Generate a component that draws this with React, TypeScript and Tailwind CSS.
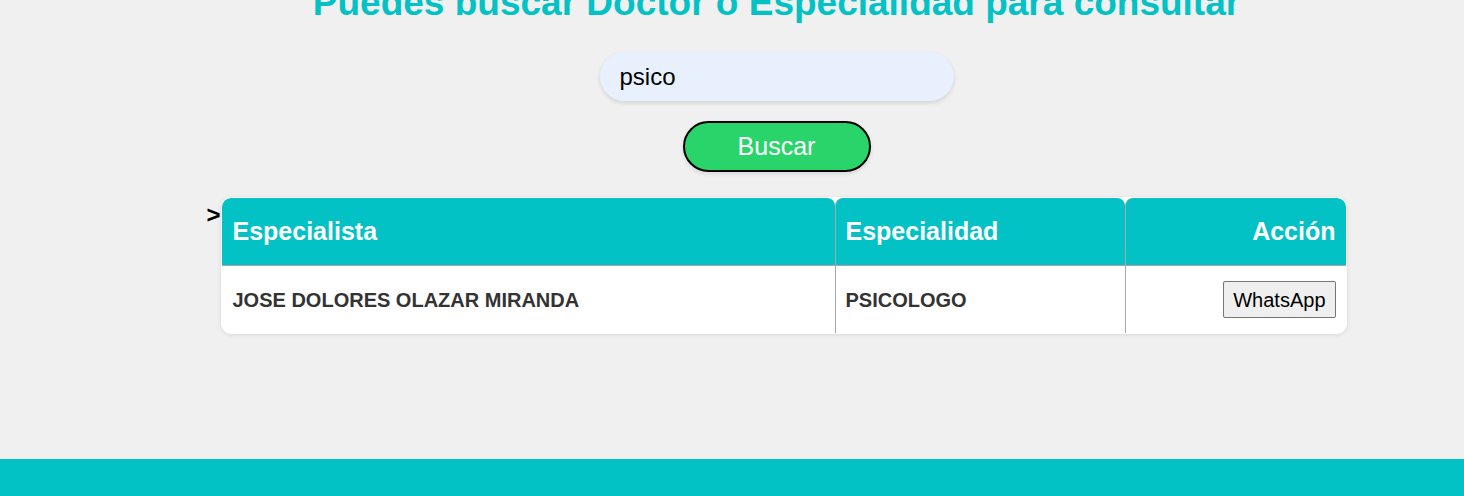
import React from 'react';

const doctors = [
  { name: 'JOSE DOLORES OLAZAR MIRANDA', specialty: 'PSICOLOGO' },
];

export default function App() {
  return (
    <div
      className="bg-[#f0f0f0] min-h-screen overflow-hidden"
      style={{ fontFamily: '"Liberation Sans", Arial, sans-serif' }}
    >
      <div className="pl-[89px] flex flex-col items-center">
        {/* Title */}
        <h1 className="mt-[-19px] text-[37px] leading-[43px] font-bold text-[#03c2c6] text-center whitespace-nowrap">
          Puedes buscar Doctor o Especialidad para consultar
        </h1>

        {/* Search */}
        <input
          type="text"
          defaultValue="psico"
          className="mt-[28px] w-[354px] h-[49px] rounded-full bg-[#e8f0fe] pl-5 text-[24px] text-black outline-none shadow-[0_2px_4px_rgba(0,0,0,0.12)]"
        />
        <button className="mt-5 w-[188px] h-[51px] rounded-full border-2 border-black bg-[#29d46b] text-white text-[25px] shadow-[0_2px_4px_rgba(0,0,0,0.1)]">
          Buscar
        </button>

        {/* Results */}
        <div className="mt-[25px] flex items-start">
          <span className="w-[14px] mt-[6px] text-[24px] font-bold text-black leading-[24px]">&gt;</span>
          <div className="w-[1126px] rounded-[10px] border border-white bg-white overflow-hidden shadow-[0_1px_4px_rgba(0,0,0,0.1)]">
            <div className="grid grid-cols-[613px_290px_221px]">
              <div className="h-[68px] flex items-center px-[11px] bg-[#03c2c6] rounded-t-[8px] border-b border-[#a8a8a8] text-white text-[25px] font-bold">
                Especialista
              </div>
              <div className="h-[68px] flex items-center px-[10px] bg-[#03c2c6] rounded-t-[8px] border-l border-b border-[#a8a8a8] text-white text-[25px] font-bold">
                Especialidad
              </div>
              <div className="h-[68px] flex items-center justify-end px-[10px] bg-[#03c2c6] rounded-t-[8px] border-l border-b border-[#a8a8a8] text-white text-[25px] font-bold">
                Acción
              </div>

              {doctors.map((d) => (
                <React.Fragment key={d.name}>
                  <div className="h-[67px] flex items-center px-[11px] text-[20px] font-bold text-[#333]">
                    {d.name}
                  </div>
                  <div className="h-[67px] flex items-center px-[10px] border-l border-[#a8a8a8] text-[20px] font-bold text-[#333]">
                    {d.specialty}
                  </div>
                  <div className="h-[67px] flex items-center justify-end px-[10px] border-l border-[#a8a8a8]">
                    <button className="h-[37px] px-[9px] bg-[#efefef] border border-[#767676] rounded-[2px] text-[20px] text-black">
                      WhatsApp
                    </button>
                  </div>
                </React.Fragment>
              ))}
            </div>
          </div>
        </div>
      </div>

      {/* Footer */}
      <div className="mt-[125px] h-[60px] bg-[#03c2c6]" />
    </div>
  );
}
